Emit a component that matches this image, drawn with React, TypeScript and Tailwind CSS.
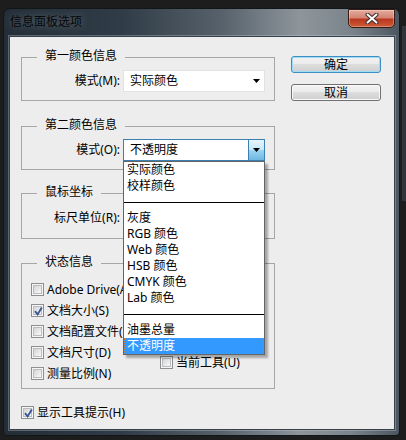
import React from "react"

const listItems: (string | null)[] = [
  "实际颜色",
  "校样颜色",
  null,
  "灰度",
  "RGB 颜色",
  "Web 颜色",
  "HSB 颜色",
  "CMYK 颜色",
  "Lab 颜色",
  null,
  "油墨总量",
  "不透明度",
]

function Checkbox({ checked = false, label }: { checked?: boolean; label?: string }) {
  return (
    <div className="flex h-[21px] items-center gap-[3px] whitespace-nowrap">
      <span className="relative h-[13px] w-[13px] shrink-0 border border-[#8f8f8f] bg-[#f6f6f6] p-[1px]">
        <span className="block h-full w-full border border-[#b9bcc0] bg-[linear-gradient(135deg,#d4d4d4,#f9f9f9)]" />
        {checked && (
          <svg className="absolute left-0 top-0" width="13" height="13" viewBox="0 0 13 13">
            <path d="M3 6.2 L5.6 9.4 L9.8 2.6" fill="none" stroke="#3a5796" strokeWidth="1.9" />
          </svg>
        )}
      </span>
      {label && <span>{label}</span>}
    </div>
  )
}

function Group({ title, className, children }: { title: string; className: string; children: React.ReactNode }) {
  return (
    <div className={`relative border border-[#a6a6a6] ${className}`}>
      <span className="absolute -top-[10px] left-[15px] bg-[#ededed] px-[8px] leading-[16px]">{title}</span>
      {children}
    </div>
  )
}

function Arrow() {
  return (
    <svg width="7" height="4" viewBox="0 0 7 4">
      <path d="M0 0 H7 L3.5 4 Z" fill="#000" />
    </svg>
  )
}

function DialogButton({ label, focused = false }: { label: string; focused?: boolean }) {
  return (
    <button
      className={`flex h-[17px] w-[90px] items-center justify-center rounded-[3px] border bg-[linear-gradient(#f2f2f2,#ebebeb_50%,#dddddd_50%,#cfcfcf)] leading-[15px] ${
        focused ? "border-[#3d8fc2] shadow-[inset_0_0_0_1px_#9fdcf7]" : "border-[#707070] shadow-[inset_0_0_0_1px_#fbfbfb]"
      }`}
    >
      {label}
    </button>
  )
}

export default function App() {
  return (
    <div className="flex h-[440px] w-[406px] overflow-hidden bg-[#1d1d1d] pl-[3px] pt-[8px] font-['Noto_Sans','Noto_Sans_CJK_SC',sans-serif] text-[12px] leading-[16px] text-black">
      <div className="flex h-[428px] w-[397px] shrink-0 flex-col rounded-t-[7px] rounded-b-[4px] border border-[#11161b] bg-[linear-gradient(90deg,#222d37_0%,#303c47_30%,#56616b_55%,#8e969c_75%,#7b848b_88%,#4b5660_100%)]">
        {/* title bar */}
        <div className="flex h-[27px] justify-between pl-[6px] pr-[4px]">
          <span className="mt-[5px] h-[16px] text-[#05080b] [text-shadow:0_0_8px_rgba(255,255,255,0.35)]">信息面板选项</span>
          <div className="flex h-[19px] w-[47px] items-center justify-center rounded-b-[5px] border border-[#3b1a12] bg-[linear-gradient(#e3ab9f,#d48473_45%,#b8391f_55%,#cf5a36)] shadow-[inset_0_0_0_1px_rgba(255,255,255,0.3)]">
            <svg width="14" height="11" viewBox="0 0 14 11">
              <path d="M2.5 1.5 L11.5 9.5 M11.5 1.5 L2.5 9.5" stroke="#3a2a27" strokeWidth="4" strokeLinecap="round" />
              <path d="M2.5 1.5 L11.5 9.5 M11.5 1.5 L2.5 9.5" stroke="#ffffff" strokeWidth="2" strokeLinecap="round" />
            </svg>
          </div>
        </div>

        {/* client area */}
        <div className="ml-[5px] mr-[4px] flex h-[394px] border border-[#36414b] bg-[#ededed] pl-[11px] pt-[19px] shadow-[0_0_0_1px_rgba(200,206,212,0.35)]">
          <div className="mt-[1px] flex w-[254px] flex-col">
            <Group title="第一颜色信息" className="h-[44px] pt-[12px]">
              <div className="flex items-center">
                <span className="w-[101px] pr-[3px] text-right">模式(M):</span>
                <div className="flex h-[22px] w-[142px] items-center justify-between border border-[#e2e2e2] bg-white pl-[6px] pr-[4px]">
                  <span>实际颜色</span>
                  <Arrow />
                </div>
              </div>
            </Group>

            <Group title="第二颜色信息" className="z-10 mt-[25px] h-[44px] pt-[12px]">
              <div className="flex items-center">
                <span className="w-[101px] pr-[3px] text-right">模式(O):</span>
                <div className="relative flex h-[22px] w-[142px] items-center justify-between border border-[#3c7fb1] bg-white pl-[6px]">
                  <span>不透明度</span>
                  <div className="flex h-full w-[16px] items-center justify-center border-l border-[#3c7fb1] bg-[linear-gradient(#e6f5fd,#c6e7f8_50%,#9dd4f1_50%,#6fb8e0)]">
                    <Arrow />
                  </div>

                  {/* open list */}
                  <div className="absolute -left-[1px] top-[21px] w-[142px] border border-[#646464] bg-white shadow-[3px_3px_2px_rgba(0,0,0,0.3)]">
                    {listItems.map((item, i) =>
                      item === null ? (
                        <div key={i} className="flex h-[16px] items-center">
                          <div className="h-[1px] w-full bg-black" />
                        </div>
                      ) : i === listItems.length - 1 ? (
                        <div key={i} className="h-[16px] border border-dotted border-[#d27a2c] bg-[#3399ff] pl-[2px] leading-[14px] text-white">
                          {item}
                        </div>
                      ) : (
                        <div key={i} className="h-[16px] pl-[3px] leading-[16px]">
                          {item}
                        </div>
                      )
                    )}
                  </div>
                </div>
              </div>
            </Group>

            <Group title="鼠标坐标" className="mt-[23px] h-[46px] pt-[13px]">
              <div className="flex items-center">
                <span className="w-[101px] pr-[3px] text-right">标尺单位(R):</span>
                <div className="h-[22px] w-[142px] border border-[#e2e2e2] bg-white" />
              </div>
            </Group>

            <Group title="状态信息" className="mt-[24px] flex h-[126px] pl-[9px] pt-[15px]">
              <div className="flex w-[92px] flex-col overflow-hidden">
                <Checkbox label="Adobe Drive(A)" />
                <Checkbox checked label="文档大小(S)" />
                <Checkbox label="文档配置文件(F)" />
                <Checkbox label="文档尺寸(D)" />
                <Checkbox label="测量比例(N)" />
              </div>
              <div className="ml-[37px] mt-[10px] flex flex-col">
                <Checkbox />
                <Checkbox />
                <Checkbox />
                <Checkbox label="当前工具(U)" />
              </div>
            </Group>

            <div className="mt-[13px]">
              <Checkbox checked label="显示工具提示(H)" />
            </div>
          </div>

          <div className="ml-[16px] flex flex-col gap-[11px]">
            <DialogButton label="确定" focused />
            <DialogButton label="取消" />
          </div>
        </div>
      </div>
      <div className="ml-[2px] mt-[18px] h-[175px] w-[4px] bg-[#30363b]" />
    </div>
  )
}
